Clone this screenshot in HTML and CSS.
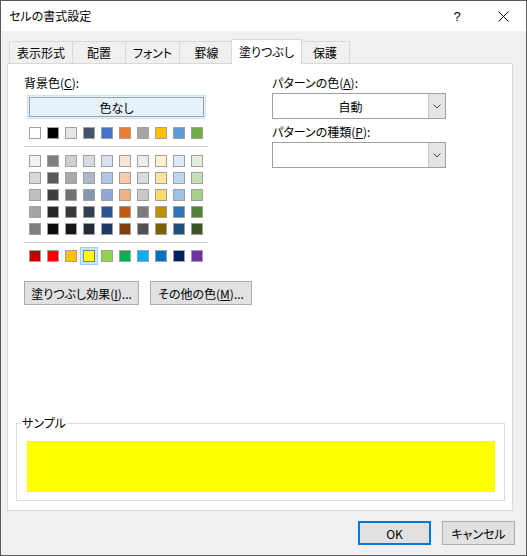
FILE: index.html
```html
<!DOCTYPE html>
<html lang="ja">
<head>
<meta charset="utf-8">
<title>セルの書式設定</title>
<link rel="stylesheet" href="styles.css">
</head>
<body>
<div class="window">
  <div class="titlebar">
    <div class="title">セルの書式設定</div>
    <div class="cap help">?</div>
    <div class="cap"><svg width="11" height="11" viewBox="0 0 11 11"><path d="M0.5 0.5L10.5 10.5M10.5 0.5L0.5 10.5" stroke="#000" stroke-width="1" fill="none"/></svg></div>
  </div>
  <div class="tabs">
    <div class="tab w1">表示形式</div>
    <div class="tab w2">配置</div>
    <div class="tab w3">フォント</div>
    <div class="tab w4">罫線</div>
    <div class="tab sel">塗りつぶし</div>
    <div class="tab w6 last">保護</div>
  </div>
  <div class="panel">
    <div class="content">
      <div class="left">
        <div class="label">背景色(<u>C</u>):</div>
        <div class="nocolor"><div class="nocolor-in">色なし</div></div>
        <div class="grid g1">
          <div class="sw" style="background:#FFFFFF"></div>
          <div class="sw" style="background:#000000"></div>
          <div class="sw" style="background:#E7E6E6"></div>
          <div class="sw" style="background:#44546A"></div>
          <div class="sw" style="background:#4472C4"></div>
          <div class="sw" style="background:#ED7D31"></div>
          <div class="sw" style="background:#A5A5A5"></div>
          <div class="sw" style="background:#FFC000"></div>
          <div class="sw" style="background:#5B9BD5"></div>
          <div class="sw" style="background:#70AD47"></div>
        </div>
        <div class="sep"></div>
        <div class="grid g2">
          <div class="sw" style="background:#F2F2F2"></div>
          <div class="sw" style="background:#7F7F7F"></div>
          <div class="sw" style="background:#D0CECE"></div>
          <div class="sw" style="background:#D6DCE4"></div>
          <div class="sw" style="background:#D9E2F3"></div>
          <div class="sw" style="background:#FBE5D5"></div>
          <div class="sw" style="background:#EDEDED"></div>
          <div class="sw" style="background:#FFF2CC"></div>
          <div class="sw" style="background:#DEEBF6"></div>
          <div class="sw" style="background:#E2EFD9"></div>

          <div class="sw" style="background:#D8D8D8"></div>
          <div class="sw" style="background:#595959"></div>
          <div class="sw" style="background:#AEAAAA"></div>
          <div class="sw" style="background:#ADB9CA"></div>
          <div class="sw" style="background:#B4C6E7"></div>
          <div class="sw" style="background:#F7CBAC"></div>
          <div class="sw" style="background:#DBDBDB"></div>
          <div class="sw" style="background:#FFE599"></div>
          <div class="sw" style="background:#BDD7EE"></div>
          <div class="sw" style="background:#C5E0B3"></div>

          <div class="sw" style="background:#BFBFBF"></div>
          <div class="sw" style="background:#3F3F3F"></div>
          <div class="sw" style="background:#757171"></div>
          <div class="sw" style="background:#8496B0"></div>
          <div class="sw" style="background:#8EAADB"></div>
          <div class="sw" style="background:#F4B183"></div>
          <div class="sw" style="background:#C9C9C9"></div>
          <div class="sw" style="background:#FFD966"></div>
          <div class="sw" style="background:#9CC3E5"></div>
          <div class="sw" style="background:#A8D08D"></div>

          <div class="sw" style="background:#A5A5A5"></div>
          <div class="sw" style="background:#262626"></div>
          <div class="sw" style="background:#3A3838"></div>
          <div class="sw" style="background:#323F4F"></div>
          <div class="sw" style="background:#2F5496"></div>
          <div class="sw" style="background:#C55A11"></div>
          <div class="sw" style="background:#7B7B7B"></div>
          <div class="sw" style="background:#BF9000"></div>
          <div class="sw" style="background:#2E75B5"></div>
          <div class="sw" style="background:#538135"></div>

          <div class="sw" style="background:#7F7F7F"></div>
          <div class="sw" style="background:#0C0C0C"></div>
          <div class="sw" style="background:#171616"></div>
          <div class="sw" style="background:#222A35"></div>
          <div class="sw" style="background:#1F3864"></div>
          <div class="sw" style="background:#833C0B"></div>
          <div class="sw" style="background:#525252"></div>
          <div class="sw" style="background:#7F6000"></div>
          <div class="sw" style="background:#1F4E79"></div>
          <div class="sw" style="background:#375623"></div>
        </div>
        <div class="sep"></div>
        <div class="grid g3">
          <div class="sw" style="background:#C00000"></div>
          <div class="sw" style="background:#FF0000"></div>
          <div class="sw" style="background:#FFC000"></div>
          <div class="sw selected" style="background:#FFFF00"></div>
          <div class="sw" style="background:#92D050"></div>
          <div class="sw" style="background:#00B050"></div>
          <div class="sw" style="background:#00B0F0"></div>
          <div class="sw" style="background:#0070C0"></div>
          <div class="sw" style="background:#002060"></div>
          <div class="sw" style="background:#7030A0"></div>
        </div>
        <div class="btnrow">
          <button class="btn b1">塗りつぶし効果(<u>I</u>)...</button>
          <button class="btn b2">その他の色(<u>M</u>)...</button>
        </div>
      </div>
      <div class="right">
        <div class="label">パターンの色(<u>A</u>):</div>
        <div class="combo">
          <div class="combo-text">自動</div>
          <div class="drop"><svg width="8" height="5" viewBox="0 0 8 5"><path d="M0.5 0.5L4 4L7.5 0.5" stroke="#404040" stroke-width="1" fill="none"/></svg></div>
        </div>
        <div class="label label2">パターンの種類(<u>P</u>):</div>
        <div class="combo">
          <div class="combo-text"></div>
          <div class="drop"><svg width="8" height="5" viewBox="0 0 8 5"><path d="M0.5 0.5L4 4L7.5 0.5" stroke="#404040" stroke-width="1" fill="none"/></svg></div>
        </div>
      </div>
    </div>
    <fieldset class="sample">
      <legend>サンプル</legend>
      <div class="preview"></div>
    </fieldset>
  </div>
  <div class="footer">
    <button class="btn fbtn ok">OK</button>
    <button class="btn fbtn">キャンセル</button>
  </div>
</div>
</body>
</html>
```
FILE: styles.css
```css
* { box-sizing: border-box; }

body {
  margin: 0;
  font-family: "Noto Sans CJK JP", "Noto Sans", sans-serif;
  font-size: 12px;
  color: #000;
  font-feature-settings: "palt" 1;
}

.window {
  width: 527px;
  height: 556px;
  border: 1px solid #5a5a5a;
  background: #f0f0f0;
  display: flex;
  flex-direction: column;
}

.titlebar {
  flex: none;
  height: 30px;
  background: #fff;
  display: flex;
  align-items: center;
}

.title {
  flex: 1;
  padding-left: 8px;
  line-height: 16px;
}

.cap {
  width: 46px;
  height: 30px;
  display: flex;
  align-items: center;
  justify-content: center;
}

.help {
  font-family: "Liberation Sans", sans-serif;
  font-size: 13px;
}

.tabs {
  flex: none;
  display: flex;
  align-items: flex-end;
  height: 24px;
  margin: 8px 0 0 8px;
}

.tab {
  height: 22px;
  border: 1px solid #d9d9d9;
  border-bottom: none;
  border-right: none;
  background: #f0f0f0;
  display: flex;
  align-items: center;
  justify-content: center;
  line-height: 16px;
}

.w1 { width: 63px; }
.w2 { width: 53px; }
.w3 { width: 54px; }
.w4 { width: 54px; }
.w6 { width: 50px; }

.tab.last { border-right: 1px solid #d9d9d9; }

.tab.sel {
  width: 71px;
  height: 25px;
  margin: 0 -2px -1px;
  padding-bottom: 1px;
  background: #fff;
  border-right: 1px solid #d9d9d9;
  position: relative;
  z-index: 1;
}

.panel {
  flex: none;
  margin-left: 6px;
  width: 506px;
  height: 448px;
  border: 1px solid #d9d9d9;
  background: #fff;
  display: flex;
  flex-direction: column;
}

.content {
  display: flex;
  padding: 11px 0 0 16px;
}

.left { width: 248px; }
.right { width: 174px; }

.label {
  height: 16px;
  line-height: 16px;
}

.label2 { margin-top: 5px; }

.nocolor {
  margin: 4px 0 0 3px;
  width: 179px;
  height: 24px;
  border: 1px solid #cce4f7;
  padding: 1px;
  background: #e5f1fb;
}

.nocolor-in {
  height: 100%;
  border: 1px solid #a0a0a0;
  display: flex;
  align-items: center;
  justify-content: center;
}

.grid {
  display: grid;
  grid-template-columns: repeat(10, 12px);
  grid-auto-rows: 12px;
  column-gap: 6px;
  row-gap: 5px;
  margin-left: 5px;
}

.g1 { margin-top: 8px; }
.g2 { margin-top: 8px; }
.g3 { margin-top: 7px; }

.sep {
  width: 184px;
  height: 1px;
  background: #c8c8c8;
  margin-top: 7px;
}

.sw {
  width: 12px;
  height: 12px;
  border: 1px solid #a0a0a0;
}

.sw.selected {
  border-color: #808080;
  box-shadow: 0 0 0 2px #cce8ff, 0 0 0 3px #99d1ff;
}

.btnrow {
  display: flex;
  gap: 11px;
  margin-top: 19px;
}

.btn {
  height: 24px;
  padding: 0;
  border: 1px solid #adadad;
  background: #e1e1e1;
  font: inherit;
  color: #000;
  display: flex;
  align-items: center;
  justify-content: center;
}

.b1 { width: 115px; }
.b2 { width: 102px; }

.combo {
  margin-top: 2px;
  height: 26px;
  border: 1px solid #a0a0a0;
  background: #fff;
  display: flex;
}

.combo-text {
  flex: 1;
  display: flex;
  align-items: center;
  justify-content: center;
}

.drop {
  width: 17px;
  background: #e5e5e5;
  border-left: 1px solid #c4c4c4;
  display: flex;
  align-items: center;
  justify-content: center;
}

.sample {
  margin: auto 7px 9px 8px;
  border: 1px solid #dcdcdc;
  padding: 0 9px 8px 10px;
  min-width: 0;
}

.sample legend {
  padding: 0 1px;
  margin-left: -6px;
  line-height: 16px;
}

.preview {
  margin-top: 10px;
  height: 51px;
  background: #ffff00;
}

.footer {
  flex: none;
  display: flex;
  justify-content: flex-end;
  gap: 11px;
  padding-right: 11px;
  margin-top: 10px;
}

.fbtn {
  width: 73px;
  height: 24px;
}

.ok { border: 2px solid #0078d7; }
```
